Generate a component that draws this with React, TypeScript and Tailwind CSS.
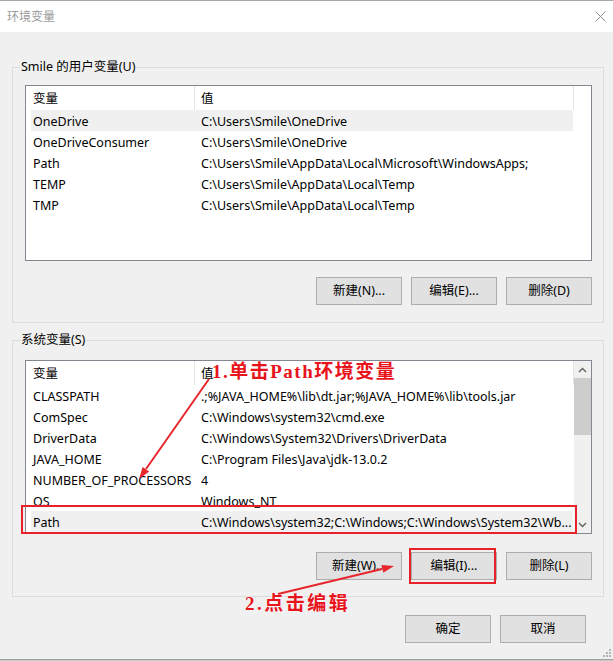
import React from "react";

const userVars: [string, string][] = [
  ["OneDrive", "C:\\Users\\Smile\\OneDrive"],
  ["OneDriveConsumer", "C:\\Users\\Smile\\OneDrive"],
  ["Path", "C:\\Users\\Smile\\AppData\\Local\\Microsoft\\WindowsApps;"],
  ["TEMP", "C:\\Users\\Smile\\AppData\\Local\\Temp"],
  ["TMP", "C:\\Users\\Smile\\AppData\\Local\\Temp"],
];

const systemVars: [string, string][] = [
  ["CLASSPATH", ".;%JAVA_HOME%\\lib\\dt.jar;%JAVA_HOME%\\lib\\tools.jar"],
  ["ComSpec", "C:\\Windows\\system32\\cmd.exe"],
  ["DriverData", "C:\\Windows\\System32\\Drivers\\DriverData"],
  ["JAVA_HOME", "C:\\Program Files\\Java\\jdk-13.0.2"],
  ["NUMBER_OF_PROCESSORS", "4"],
  ["OS", "Windows_NT"],
  ["Path", "C:\\Windows\\system32;C:\\Windows;C:\\Windows\\System32\\Wb..."],
];

function Header() {
  return (
    <div className="flex h-[24px] bg-white">
      <div className="flex h-full w-[169px] items-center border-r border-[#e5e5e5] pl-[7px] pt-[3px]">变量</div>
      <div className="flex h-full w-[379px] items-center border-r border-[#e5e5e5] pl-[6px] pt-[3px]">值</div>
    </div>
  );
}

function Rows({ rows, selected }: { rows: [string, string][]; selected: number }) {
  return (
    <div className="pl-[5px]">
      {rows.map(([name, value], i) => (
        <div
          key={name + i}
          className={`flex h-[21px] w-[542px] items-center whitespace-nowrap ${i === selected ? "bg-[#f0f0f0]" : ""}`}
        >
          <div className="w-[164px] overflow-hidden pl-[2px] pt-[2px] leading-[17px]">{name}</div>
          <div className="w-[378px] overflow-hidden pl-[6px] pt-[2px] leading-[17px]">{value}</div>
        </div>
      ))}
    </div>
  );
}

function Btn({ label }: { label: string }) {
  return (
    <button className="h-[28px] w-[86px] border border-[#adadad] bg-[#e1e1e1] text-[12.5px] text-black">
      {label}
    </button>
  );
}

function Chevron({ up }: { up?: boolean }) {
  return (
    <svg width="9" height="6" viewBox="0 0 9 6">
      <path
        d={up ? "M1 5 L4.5 1.5 L8 5" : "M1 1 L4.5 4.5 L8 1"}
        fill="none"
        stroke="#606060"
        strokeWidth="1.4"
      />
    </svg>
  );
}

export default function App() {
  return (
    <div className="relative flex h-[661px] w-[613px] flex-col overflow-hidden bg-[#f0f0f0] font-['Noto_Sans','Noto_Sans_CJK_SC',sans-serif] text-[12.5px] text-black">
      {/* title bar */}
      <div className="flex h-[32px] items-center justify-between border-t border-[#a6a6a6] bg-white pl-[7px] pr-[7px]">
        <span className="text-[12px] text-[#9a9a9a]">环境变量</span>
        <svg width="11" height="11" viewBox="0 0 11 11">
          <path d="M0.5 0.5 L10.5 10.5 M10.5 0.5 L0.5 10.5" stroke="#8a8a8a" strokeWidth="1" />
        </svg>
      </div>

      <div className="flex-1 pl-[12px]">
        <fieldset className="mt-[27px] w-[592px] border border-[#dcdcdc] pb-[17px] pl-[7px]">
          <legend className="px-[1px] leading-[16px]">Smile 的用户变量(U)</legend>
          <div className="ml-[5px] mt-[10px] h-[176px] w-[567px] border border-[#828790] bg-white">
            <Header />
            <Rows rows={userVars} selected={0} />
          </div>
          <div className="ml-[5px] mt-[16px] flex w-[567px] justify-end gap-[9px]">
            <Btn label="新建(N)..." />
            <Btn label="编辑(E)..." />
            <Btn label="删除(D)" />
          </div>
        </fieldset>

        <fieldset className="mt-[9px] w-[592px] border border-[#dcdcdc] pb-[16px] pl-[7px]">
          <legend className="px-[1px] leading-[16px]">系统变量(S)</legend>
          <div className="ml-[5px] mt-[12px] flex h-[174px] w-[567px] overflow-hidden border border-[#828790] bg-white">
            <div className="w-[548px]">
              <Header />
              <Rows rows={systemVars} selected={6} />
            </div>
            <div className="flex w-[17px] flex-col bg-[#f0f0f0]">
              <div className="flex h-[17px] items-center justify-center">
                <Chevron up />
              </div>
              <div className="h-[57px] bg-[#cdcdcd]" />
              <div className="flex-1" />
              <div className="flex h-[17px] items-center justify-center">
                <Chevron />
              </div>
            </div>
          </div>
          <div className="ml-[5px] mt-[18px] flex w-[567px] justify-end gap-[9px]">
            <Btn label="新建(W)..." />
            <Btn label="编辑(I)..." />
            <Btn label="删除(L)" />
          </div>
        </fieldset>

        <div className="mt-[18px] flex justify-end gap-[9px] pr-[27px]">
          <Btn label="确定" />
          <Btn label="取消" />
        </div>
      </div>

      <div className="h-[1px] bg-[#a0a0a0]" />
      <div className="h-[1px] bg-[#c8c8c8]" />

      {/* size grip */}
      <svg className="absolute bottom-[3px] right-[1px]" width="10" height="10" viewBox="0 0 10 10">
        <g fill="#b4b4b4">
          <rect x="7" y="1" width="2" height="2" />
          <rect x="4" y="4" width="2" height="2" />
          <rect x="7" y="4" width="2" height="2" />
          <rect x="1" y="7" width="2" height="2" />
          <rect x="4" y="7" width="2" height="2" />
          <rect x="7" y="7" width="2" height="2" />
        </g>
      </svg>

      {/* annotations */}
      <div className="absolute left-[21px] top-[505px] h-[29px] w-[556px] border-2 border-[#e8202a]" />
      <div className="absolute left-[409px] top-[548px] h-[36px] w-[87px] border-2 border-[#e8202a]" />

      <div className="absolute left-[212px] top-[361px] whitespace-nowrap font-['Liberation_Serif','Noto_Sans_CJK_SC',serif] text-[19px] font-bold leading-[22px] tracking-[1.5px] text-[#e8141c] [text-shadow:0_0_2px_#fff]">
        1.单击Path环境变量
      </div>
      <div className="absolute left-[245px] top-[593px] whitespace-nowrap font-['Liberation_Serif','Noto_Sans_CJK_SC',serif] text-[19px] font-bold leading-[22px] tracking-[2.5px] text-[#e8141c] [text-shadow:0_0_2px_#fff]">
        2.点击编辑
      </div>

      <svg className="pointer-events-none absolute left-0 top-0" width="613" height="661" viewBox="0 0 613 661">
        <g stroke="#e8262d" strokeWidth="2" fill="#e8262d">
          <line x1="209" y1="379" x2="146" y2="469" />
          <line x1="278" y1="594" x2="382" y2="569" />
        </g>
        <g fill="#e8262d">
          <polygon points="139,479 149.2,471.5 142.6,466.9" />
          <polygon points="394,566 383.3,572.7 381.4,564.9" />
        </g>
      </svg>
    </div>
  );
}
